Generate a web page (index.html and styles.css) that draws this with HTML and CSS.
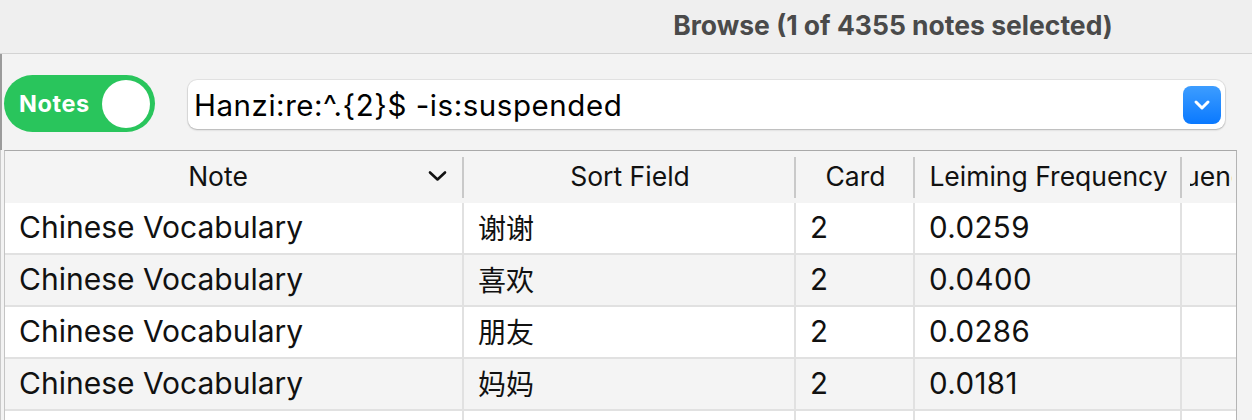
FILE: index.html
```html
<!DOCTYPE html>
<html lang="en">
<head>
<meta charset="utf-8">
<title>Browse</title>
<link rel="stylesheet" href="styles.css">
</head>
<body>
<div class="window">
  <header class="titlebar">
    <span class="title">Browse (1 of 4355 notes selected)</span>
  </header>
  <div class="toolbar">
    <div class="toggle">
      <span class="toggle-label">Notes</span>
      <span class="knob"></span>
    </div>
    <div class="search">
      <span class="search-text">Hanzi:re:^.{2}$ -is:suspended</span>
      <span class="search-btn">
        <svg width="18" height="12" viewBox="0 0 18 12"><path d="M3 3 L9 9 L15 3" fill="none" stroke="#fff" stroke-width="3" stroke-linecap="round" stroke-linejoin="round"/></svg>
      </span>
    </div>
  </div>
  <div class="table-wrap">
    <div class="table">
      <div class="row head">
        <div class="hcell first">
          <span class="hlabel">Note</span>
          <svg class="sort" width="19" height="12" viewBox="0 0 19 12"><path d="M2 2.5 L9.5 9.5 L17 2.5" fill="none" stroke="#111" stroke-width="2.6" stroke-linecap="round" stroke-linejoin="round"/></svg>
        </div>
        <div class="hcell"><span class="hlabel">Sort Field</span></div>
        <div class="hcell"><span class="hlabel">Card</span></div>
        <div class="hcell"><span class="hlabel">Leiming Frequency</span></div>
        <div class="hcell last"><span class="clip"><span class="cut">Frequency</span></span></div>
      </div>
      <div class="row">
        <div class="cell">Chinese Vocabulary</div>
        <div class="cell cjk">谢谢</div>
        <div class="cell num">2</div>
        <div class="cell num">0.0259</div>
        <div class="cell"></div>
      </div>
      <div class="row alt">
        <div class="cell">Chinese Vocabulary</div>
        <div class="cell cjk">喜欢</div>
        <div class="cell num">2</div>
        <div class="cell num">0.0400</div>
        <div class="cell"></div>
      </div>
      <div class="row">
        <div class="cell">Chinese Vocabulary</div>
        <div class="cell cjk">朋友</div>
        <div class="cell num">2</div>
        <div class="cell num">0.0286</div>
        <div class="cell"></div>
      </div>
      <div class="row alt">
        <div class="cell">Chinese Vocabulary</div>
        <div class="cell cjk">妈妈</div>
        <div class="cell num">2</div>
        <div class="cell num">0.0181</div>
        <div class="cell"></div>
      </div>
      <div class="row">
        <div class="cell"></div>
        <div class="cell"></div>
        <div class="cell"></div>
        <div class="cell"></div>
        <div class="cell"></div>
      </div>
    </div>
  </div>
</div>
</body>
</html>
```

FILE: styles.css
```css
* { box-sizing: border-box; }
html, body {
  margin: 0;
  padding: 0;
  width: 1252px;
  height: 420px;
  overflow: hidden;
  background: #f3f3f3;
  font-family: Inter, "Liberation Sans", "Noto Sans CJK SC", sans-serif;
  color: #111;
}
.window {
  width: 1252px;
  height: 420px;
  display: flex;
  flex-direction: column;
  overflow: hidden;
}
.titlebar {
  height: 54px;
  flex: none;
  background: #efefef;
  border-bottom: 1px solid #d3d3d3;
  display: flex;
  align-items: center;
  justify-content: center;
  padding-left: 534px;
}
.title {
  font-weight: 700;
  font-size: 26.5px;
  color: #4a4a4a;
  white-space: nowrap;
  margin-top: -3px;
}
.toolbar {
  height: 96px;
  flex: none;
  display: flex;
  align-items: center;
  border-left: 2px solid #9b9b9b;
  padding: 3px 27px 0 2px;
}
.toggle {
  width: 151px;
  height: 57px;
  border-radius: 29px;
  background: #29c55c;
  display: flex;
  align-items: center;
  justify-content: space-between;
  padding: 0 5px 0 15px;
  flex: none;
}
.toggle-label {
  color: #fff;
  font-weight: 700;
  font-size: 23.5px;
  letter-spacing: 0.6px;
}
.knob {
  width: 48px;
  height: 48px;
  border-radius: 50%;
  background: #fff;
}
.search {
  margin-left: 33px;
  flex: 1;
  height: 49px;
  background: #fff;
  border-radius: 9px;
  box-shadow: 0 0 0 1px rgba(0,0,0,0.06), 0 1px 2px rgba(0,0,0,0.22);
  display: flex;
  align-items: center;
  justify-content: space-between;
  padding: 0 4px 0 6px;
  margin-top: 2px;
}
.search-text {
  font-size: 29.5px;
  letter-spacing: 0.55px;
  color: #000;
  white-space: nowrap;
}
.search-btn {
  width: 38px;
  height: 38px;
  border-radius: 8px;
  background: linear-gradient(#3d9dff, #0a79ff);
  display: flex;
  align-items: center;
  justify-content: center;
}
.table-wrap {
  flex: 1;
  border-left: 1px solid #c9c9c9;
  padding-left: 3px;
  overflow: hidden;
}
.table {
  width: 1233px;
  border-top: 1px solid #a9a9a9;
  border-left: 1px solid #c4c4c4;
  border-right: 1px solid #b4b4b4;
}
.row {
  display: grid;
  grid-template-columns: 459px 332px 119px 267px 1fr;
  height: 52px;
  background: #fff;
}
.row.alt { background: #f4f4f4; }
.row.head {
  height: 52px;
  background: #f4f4f4;
}
.hcell {
  display: flex;
  align-items: center;
  justify-content: center;
  font-size: 26.5px;
  position: relative;
  white-space: nowrap;
  overflow: hidden;
  padding-bottom: 2px;
}
.hcell::after {
  content: "";
  position: absolute;
  right: 0;
  top: 6px;
  bottom: 5px;
  width: 2px;
  background: #c9c9c9;
}
.hcell.last::after { display: none; }
.hcell.first { justify-content: flex-start; }
.hcell.first .hlabel { flex: 1; text-align: center; padding-left: 3px; }
.sort { margin-right: 17px; flex: none; }
.hcell.last { justify-content: flex-start; padding-left: 8px; padding-right: 4px; }
.clip { overflow: hidden; display: block; width: 100%; }
.cut { display: block; margin-left: -62px; }
.cell {
  display: flex;
  align-items: center;
  padding: 0 0 2px 14px;
  font-size: 30px;
  border-right: 2px solid #e1e1e1;
  border-bottom: 2px solid #e1e1e1;
  white-space: nowrap;
  overflow: hidden;
}
.cell:last-child { border-right: none; }
.cjk {
  font-family: "Noto Sans CJK SC", sans-serif;
  font-size: 28px;
}
.num { font-size: 29.5px; letter-spacing: 0.4px; }
```
